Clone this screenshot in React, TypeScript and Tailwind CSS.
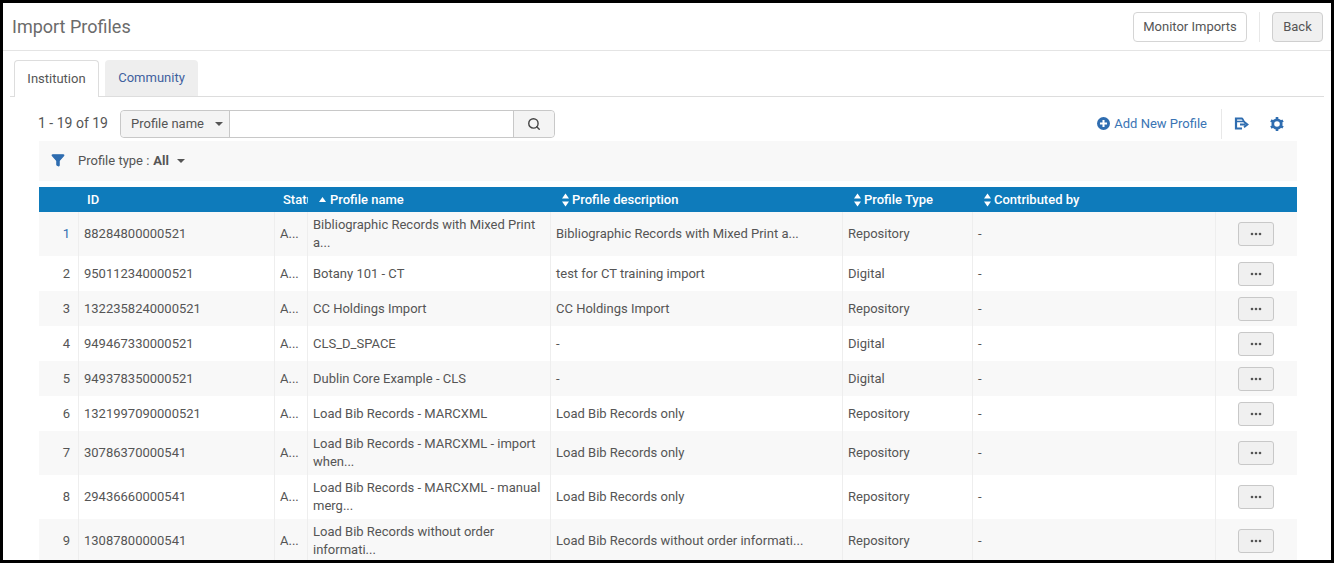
import React from "react";
import { Search, Filter } from "lucide-react";

const cols = "grid grid-cols-[40px_196px_33px_243px_292px_130px_243px_81px]";

const rows: [string, string, string, string, string, number][] = [
  ["1", "88284800000521", "Bibliographic Records with Mixed Print a...", "Bibliographic Records with Mixed Print a...", "Repository", 44],
  ["2", "950112340000521", "Botany 101 - CT", "test for CT training import", "Digital", 35],
  ["3", "1322358240000521", "CC Holdings Import", "CC Holdings Import", "Repository", 35],
  ["4", "949467330000521", "CLS_D_SPACE", "-", "Digital", 35],
  ["5", "949378350000521", "Dublin Core Example - CLS", "-", "Digital", 35],
  ["6", "1321997090000521", "Load Bib Records - MARCXML", "Load Bib Records only", "Repository", 35],
  ["7", "30786370000541", "Load Bib Records - MARCXML - import when...", "Load Bib Records only", "Repository", 44],
  ["8", "29436660000541", "Load Bib Records - MARCXML - manual merg...", "Load Bib Records only", "Repository", 44],
  ["9", "13087800000541", "Load Bib Records without order informati...", "Load Bib Records without order informati...", "Repository", 44],
];

function SortIcon() {
  return (
    <svg width="7" height="14" viewBox="0 0 7 14" className="mr-[3px] shrink-0" fill="#fff">
      <path d="M3.5 0.5 L7 5.5 H0 Z" />
      <path d="M3.5 13.5 L7 8.5 H0 Z" />
    </svg>
  );
}

function Caret({ className }: { className: string }) {
  return (
    <svg width="8" height="4" viewBox="0 0 8 4" className={className} fill="#555">
      <path d="M0 0 H8 L4 4 Z" />
    </svg>
  );
}

function Cell({ children, className = "" }: { children: React.ReactNode; className?: string }) {
  return <div className={`flex items-center border-r border-[#eeeeee] pl-[5px] pr-[8px] leading-[18px] ${className}`}>{children}</div>;
}

export default function App() {
  return (
    <div className="h-[563px] w-[1334px] overflow-hidden border-[3px] border-black bg-white font-['Roboto',sans-serif] text-[13px] text-[#555555]">
      <header className="flex h-[48px] items-center border-b border-[#e4e4e4] pl-[9px] pr-[8px]">
        <h1 className="text-[18px] font-normal text-[#6b6b6b]">Import Profiles</h1>
        <div className="ml-auto flex items-center">
          <button className="h-[30px] w-[114px] rounded-[4px] border border-[#d5d5d5] bg-white text-[13px] text-[#555]">Monitor Imports</button>
          <div className="mx-[12px] h-[30px] w-px bg-[#e8e8e8]" />
          <button className="h-[30px] w-[51px] rounded-[4px] border border-[#cfcfcf] bg-[#f0f0f0] text-[13px] text-[#555]">Back</button>
        </div>
      </header>

      <nav className="ml-[7px] mr-[7px] mt-[9px] flex h-[37px] gap-[6px] border-b border-[#dddddd] pl-[4px]">
        <div className="flex h-[37px] w-[85px] items-center justify-center rounded-t-[4px] border border-b-0 border-[#dddddd] bg-white text-[13px] text-[#555]">Institution</div>
        <div className="flex h-[36px] w-[93px] items-center justify-center rounded-t-[4px] bg-[#eeeeee] text-[13px] text-[#3f5f9e]">Community</div>
      </nav>

      <div className="ml-[36px] mr-[34px]">
        <div className="flex h-[35px] items-center pt-[10px] pb-[1px] box-content -mt-[1px]">
          <span className="w-[82px] -ml-[1px] text-[14px] text-[#555]">1 - 19 of 19</span>
          <div className="flex h-[28px] w-[435px] rounded-[4px] border border-[#c8c8c8]">
            <div className="flex w-[109px] items-center border-r border-[#c8c8c8] bg-[#f4f4f4] pl-[10px] rounded-l-[4px] text-[13px]">
              Profile name
              <Caret className="ml-[11px]" />
            </div>
            <div className="flex-1 bg-white" />
            <div className="flex w-[41px] items-center justify-center border-l border-[#c8c8c8] bg-[#f4f4f4] rounded-r-[4px]">
              <Search size={14} strokeWidth={2.4} color="#444" />
            </div>
          </div>
          <div className="ml-auto flex h-[30px] items-center">
            <svg width="13" height="13" viewBox="0 0 14 14" className="mr-[4px]">
              <circle cx="7" cy="7" r="7" fill="#2f6db0" />
              <path d="M7 3.2 V10.8 M3.2 7 H10.8" stroke="#fff" strokeWidth="2.2" />
            </svg>
            <span className="text-[13px] text-[#3a74b4]">Add New Profile</span>
            <div className="ml-[14px] h-[30px] w-px bg-[#e8e8e8]" />
            <svg width="15" height="13" viewBox="0 0 15 13" className="ml-[12px]" fill="none">
              <path d="M8 1.5 H2 V11.5 H8" stroke="#2f6db0" strokeWidth="2.2" />
              <path d="M8 1 L10 4.5 H3" stroke="#2f6db0" strokeWidth="1.6" />
              <path d="M6 7.5 H11.5 M10 4.8 L13.5 7.5 L10 10.2" stroke="#2f6db0" strokeWidth="1.8" />
            </svg>
            <svg width="14" height="14" viewBox="0 0 14 14" className="ml-[21px] mr-[13px]">
              <circle cx="7" cy="7" r="4.2" fill="none" stroke="#2f6db0" strokeWidth="2.8" />
              <path d="M7 0 V14 M0.9 3.5 L13.1 10.5 M0.9 10.5 L13.1 3.5" stroke="#2f6db0" strokeWidth="2.6" strokeDasharray="2.4 9.2" />
            </svg>
          </div>
        </div>

        <div className="mt-[-1px] flex h-[40px] items-center bg-[#f8f8f8] pl-[12px]">
          <Filter size={14} fill="#2f6db0" color="#2f6db0" className="-mt-[3px]" />
          <span className="ml-[13px] text-[13px] text-[#555]">Profile type :</span>
          <span className="ml-[4px] text-[13px] font-bold text-[#555]">All</span>
          <Caret className="ml-[8px]" />
        </div>

        <div className="mt-[6px] w-[1258px]">
          <div className={`${cols} h-[25px] items-center bg-[#0e7bbb] text-[13px] font-medium text-white`}>
            <div />
            <div className="pl-[8px]">ID</div>
            <div className="overflow-hidden pl-[8px] whitespace-nowrap">Status</div>
            <div className="flex items-center pl-[11px]">
              <svg width="7" height="5" viewBox="0 0 7 5" fill="#fff" className="mr-[4px]"><path d="M3.5 0 L7 5 H0 Z" /></svg>
              Profile name
            </div>
            <div className="flex items-center pl-[11px]"><SortIcon />Profile description</div>
            <div className="flex items-center pl-[11px]"><SortIcon />Profile Type</div>
            <div className="flex items-center pl-[11px]"><SortIcon />Contributed by</div>
            <div />
          </div>
          {rows.map((r, i) => (
            <div key={r[0]} className={`${cols} ${i % 2 === 0 ? "bg-[#f8f8f8]" : "bg-white"}`} style={{ height: r[5] }}>
              <Cell className={`justify-end pr-[7px] ${i === 0 ? "text-[#2f6db0]" : ""}`}>{r[0]}</Cell>
              <Cell>{r[1]}</Cell>
              <Cell>A...</Cell>
              <Cell>{r[2]}</Cell>
              <Cell>{r[3]}</Cell>
              <Cell>{r[4]}</Cell>
              <Cell>-</Cell>
              <div className="flex items-center pl-[22px]">
                <button className="flex h-[24px] w-[36px] items-center justify-center rounded-[3px] border border-[#c8c8c8] bg-[#f0f0f0] text-[#555]">
                  <svg width="12" height="4" viewBox="0 0 12 4" fill="#555">
                    <circle cx="2" cy="2" r="1.3" /><circle cx="6" cy="2" r="1.3" /><circle cx="10" cy="2" r="1.3" />
                  </svg>
                </button>
              </div>
            </div>
          ))}
        </div>
      </div>
    </div>
  );
}
